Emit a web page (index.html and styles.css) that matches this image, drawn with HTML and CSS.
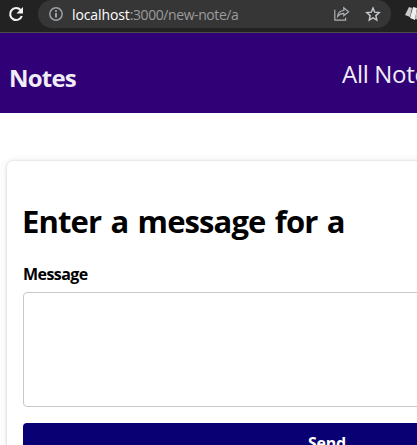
FILE: index.html
```html
<!DOCTYPE html>
<html lang="en">
<head>
<meta charset="utf-8">
<title>Notes</title>
<link rel="stylesheet" href="styles.css">
</head>
<body>
<div class="toolbar">
  <svg class="reload" width="16" height="16" viewBox="0 0 16 16"><path d="M12.6 4A6 6 0 1 0 13.8 10" fill="none" stroke="#f1f3f4" stroke-width="2.1"/><path d="M15 1v6.6H8.4z" fill="#f1f3f4"/></svg>
  <div class="address">
    <svg class="info" width="14" height="14" viewBox="0 0 14 14"><circle cx="7" cy="7" r="6.2" fill="none" stroke="#9aa0a6" stroke-width="1.5"/><path d="M7 6v4.6M7 3.3v1.6" stroke="#b0b4b8" stroke-width="1.7"/></svg>
    <span class="url"><span class="host">localhost</span>:3000/new-note/a</span>
    <svg class="share" width="16" height="15" viewBox="0 0 16 15" fill="none" stroke="#aeb1b5" stroke-width="1.2"><path d="M.8 3.8v10.4h10.8v-2.4M3.6 10.4c.4-3.8 2.6-5.7 6.2-5.9V1.8l4.8 4-4.8 4V7.3c-2.6 0-4.6.9-6.2 3.1z"/></svg>
    <svg class="star" width="16" height="16" viewBox="0 0 14 14"><path d="M7 1.8l1.5 3.6 3.9.4-2.9 2.6.8 3.9L7 10.3l-3.3 2 .8-3.9-2.9-2.6 3.9-.4z" fill="none" stroke="#c4c7ca" stroke-width="1.3"/></svg>
  </div>
  <svg class="extension" width="18" height="16" viewBox="0 0 18 16"><path d="M4 1l3 1-2 9-5-2z" fill="#c9cacb"/><path d="M8 1l4 1-2 12-5-2z" fill="#eee"/><path d="M12 2l5 1-2 11-5-1z" fill="#bcbec0"/></svg>
</div>
<header class="navbar">
  <div class="brand">Notes</div>
  <nav class="links"><a>All Notes</a></nav>
</header>
<main class="card">
  <h1>Enter a message for a</h1>
  <form>
    <label for="message">Message</label>
    <textarea id="message"></textarea>
    <button type="button">Send</button>
  </form>
</main>
</body>
</html>
```
FILE: styles.css
```css
* { box-sizing: border-box; }
html { overflow: hidden; }
body {
  margin: 0;
  width: 654px;
  background: #fff;
  color: #000;
  font-family: "Open Sans", "Noto Sans", sans-serif;
}
.toolbar {
  display: flex;
  height: 33px;
  padding-left: 8px;
  background: #222222;
  border-bottom: 1px solid #4d4d4d;
}
.reload { margin: 6px 14px 0 0; }
.address {
  display: flex;
  width: 353px;
  height: 28px;
  padding-left: 11px;
  background: #363636;
  border-radius: 14px;
}
.info { margin-top: 7px; }
.url {
  width: 262px;
  margin-left: 9px;
  color: #9c9c9c;
  font-size: 14px;
  line-height: 29px;
  letter-spacing: -0.42px;
}
.host { color: #fff; letter-spacing: -0.1px; }
.share { margin-top: 6px; }
.star { margin: 6px 0 0 15px; }
.extension { margin: 6px 0 0 14px; }
.navbar {
  display: flex;
  justify-content: space-between;
  height: 80px;
  padding: 0 0 0 9px;
  background: #2f0076;
  color: #f1edf7;
  font-size: 24px;
  line-height: 32px;
}
.brand { padding-top: 29px; font-weight: 700; letter-spacing: -0.8px; }
.links { width: 312px; padding-top: 25px; letter-spacing: -0.3px; }
.card {
  width: 640px;
  height: 340px;
  margin: 48px 0 0 7px;
  padding: 39px 16px;
  border-radius: 6px;
  box-shadow: 0 0 3px rgba(0, 0, 0, .16), 0 1px 10px rgba(20, 55, 50, .1);
}
h1 {
  margin: 0 0 21px -1px;
  font-size: 31px;
  line-height: 43px;
  letter-spacing: -0.9px;
  word-spacing: 2.2px;
  white-space: nowrap;
}
form { display: flex; flex-direction: column; }
label {
  margin-bottom: 7px;
  font-size: 16px;
  font-weight: 700;
  line-height: 21px;
  letter-spacing: -0.55px;
}
textarea {
  height: 115px;
  margin: 0 0 16px;
  border: 1px solid #c8c8c8;
  border-radius: 4px;
  resize: none;
}
button {
  height: 43px;
  padding: 0 0 2px;
  border: 0;
  border-radius: 4px;
  background: #090073;
  color: #fff;
  font: 700 16px/41px "Open Sans", "Noto Sans", sans-serif;
  letter-spacing: -0.2px;
}
```
